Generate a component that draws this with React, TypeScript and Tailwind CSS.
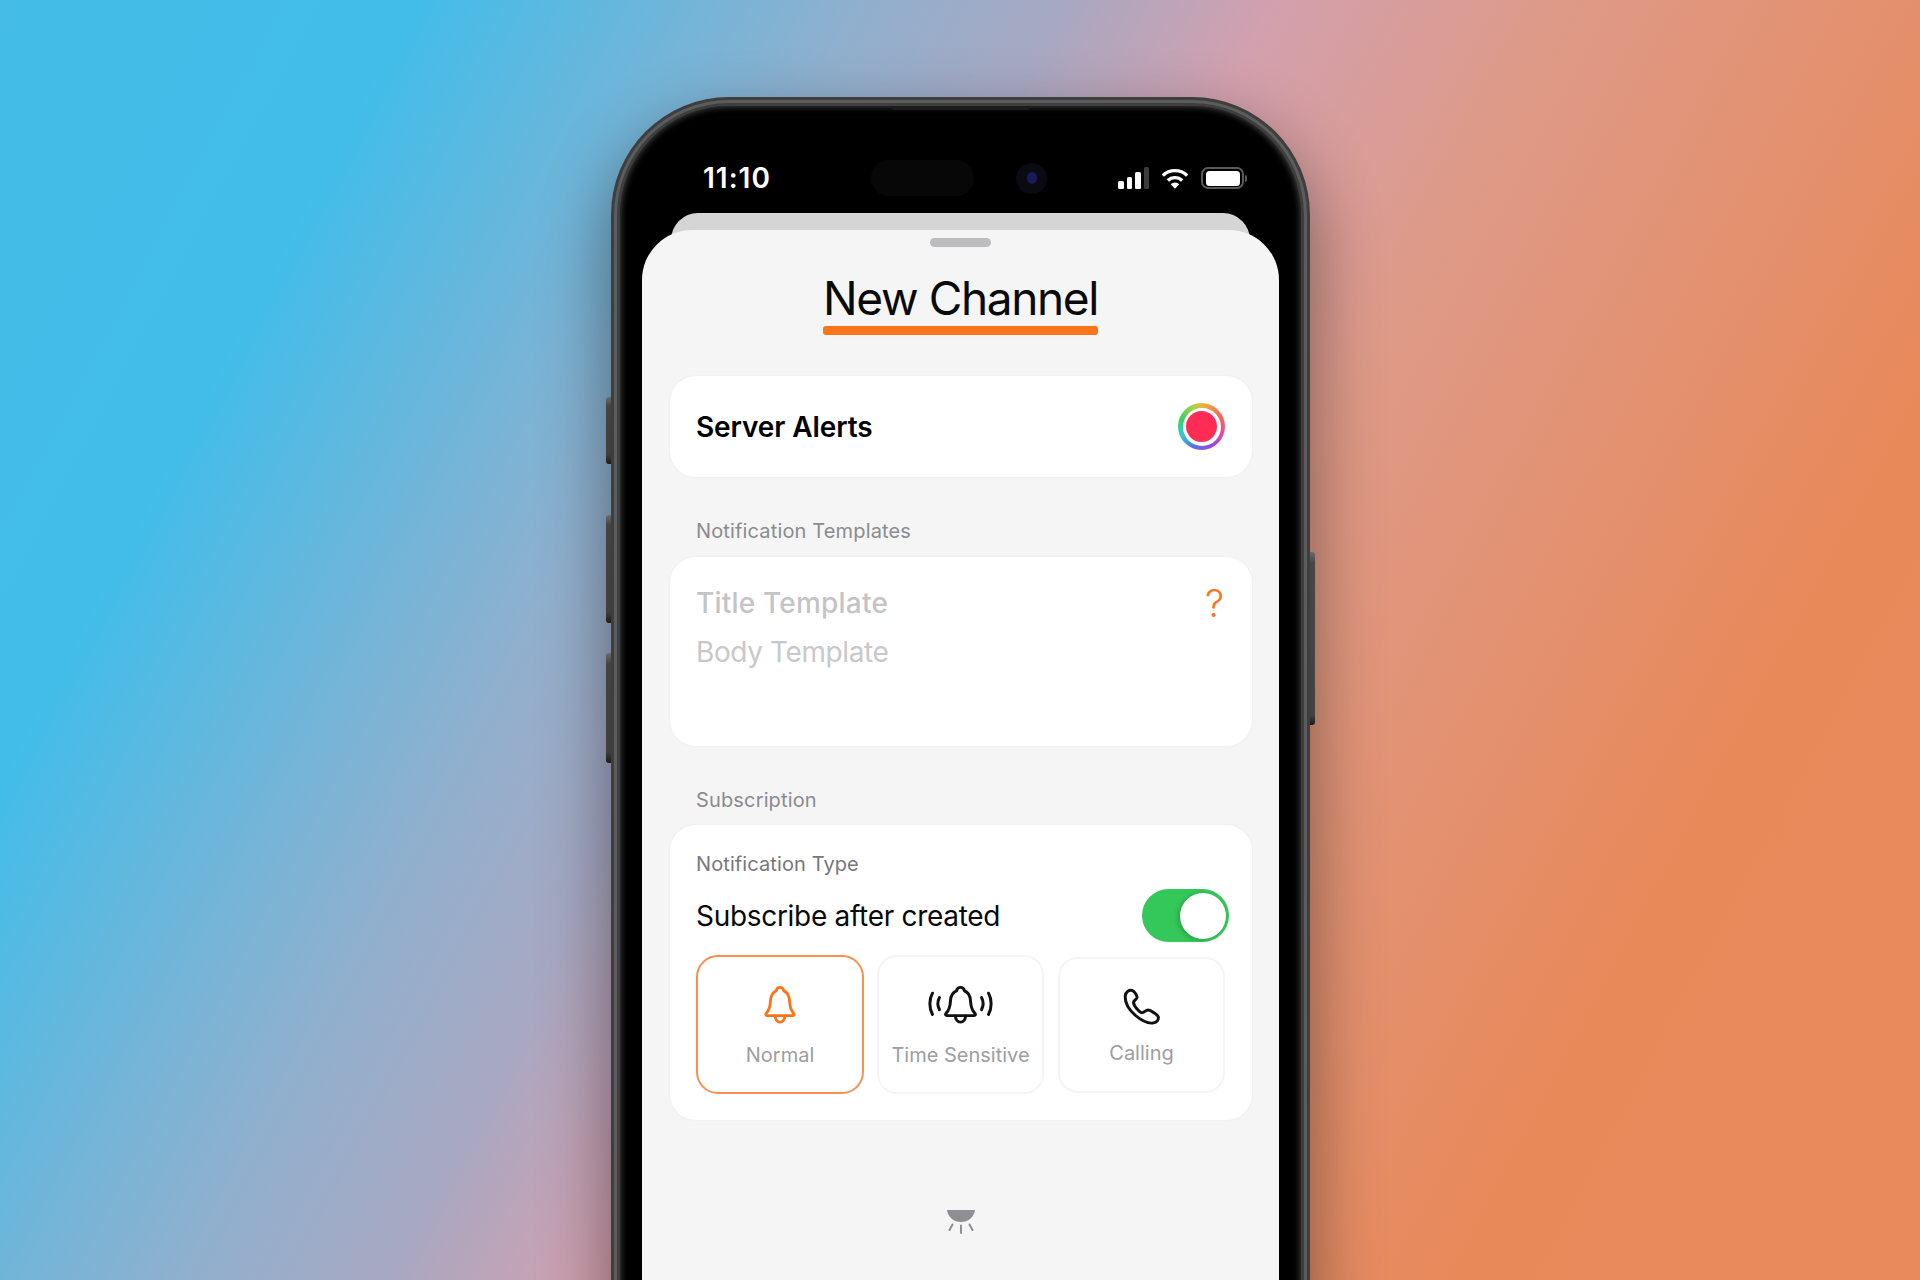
const font = "font-['Inter','Noto_Sans',sans-serif]";

function Bell({ className }: { className: string }) {
  return (
    <svg viewBox="0 0 34 40" className={className} fill="none" stroke="currentColor" strokeWidth="3" strokeLinecap="round" strokeLinejoin="round">
      <path d="M17 1.500c-2.300 0-3.600 1.700-3.900 3.600C9 6.600 7.300 10.600 7 15.500c-.3 5.600-1.200 9.800-4.400 13.200-1 1.100-.6 2.500.9 2.500h27c1.500 0 1.900-1.400.9-2.500-3.200-3.400-4.100-7.600-4.400-13.200-.3-4.900-2-8.900-6.100-10.400-.3-1.900-1.600-3.600-3.900-3.600Z" />
      <path d="M11.800 31.500c.3 3.600 2.400 6.500 5.200 6.500s4.900-2.900 5.200-6.500" />
    </svg>
  );
}

function RingBell() {
  return (
    <svg viewBox="0 0 67 40" className="h-[38px] w-[67px] text-[#111]" preserveAspectRatio="none" fill="none" stroke="currentColor" strokeWidth="3" strokeLinecap="round" strokeLinejoin="round">
      <g transform="translate(16.500 0)">
        <path d="M17 1.500c-2.300 0-3.600 1.700-3.900 3.600C9 6.600 7.300 10.600 7 15.500c-.3 5.600-1.200 9.800-4.400 13.200-1 1.100-.6 2.500.9 2.500h27c1.500 0 1.900-1.400.9-2.500-3.200-3.400-4.100-7.600-4.400-13.200-.3-4.900-2-8.900-6.100-10.400-.3-1.900-1.600-3.600-3.900-3.600Z" />
        <path d="M11.800 31.500c.3 3.600 2.400 6.500 5.200 6.500s4.900-2.900 5.200-6.500" />
      </g>
      <path d="M5.500 7.500C2 14 2 23 5.500 30" />
      <path d="M12.500 12c-2 4-2 9 0 13" />
      <path d="M61.500 7.500c3.500 6.500 3.500 15.500 0 22.500" />
      <path d="M54.500 12c2 4 2 9 0 13" />
    </svg>
  );
}

function PhoneGlyph() {
  return (
    <svg viewBox="0 0 37 39" className="h-[37px] w-[37px] text-[#111]" preserveAspectRatio="none" fill="none" stroke="currentColor" strokeWidth="3" strokeLinecap="round" strokeLinejoin="round">
      <path d="M9 2.500C6 1.700 2.800 4 2.300 8 1.700 14.500 5.800 22.500 12 28.500c6 5.500 13 9.300 18.500 8.300 3.200-.6 5.300-3.300 4.800-6.300-.4-2-7.800-7.300-10.300-7.300-2.200 0-4 3-6 3-3-.6-8.300-7.500-8.500-11 0-2.200 3-3 3.500-5.200C14.300 8 11.300 3.300 9 2.500Z" />
    </svg>
  );
}

function Tile({ label, icon, active, className, labelClass }: { label: string; icon: React.ReactNode; active?: boolean; className: string; labelClass: string }) {
  return (
    <div className={`flex flex-col items-center bg-white ${active ? "rounded-[22px] border-2 border-[#fb8f4e]" : "rounded-[20px] border-2 border-[#f5f5f6]"} ${className}`}>
      <div className="flex h-[38px] items-center justify-center">{icon}</div>
      <div className={`text-[20px] leading-[24px] text-[#9d9da2] ${labelClass}`}>{label}</div>
    </div>
  );
}

function SectionLabel({ children, className = "" }: { children: React.ReactNode; className?: string }) {
  return <div className={`pl-[26px] text-[20px] leading-[24px] tracking-[0.15px] text-[#8b8b90] ${className}`}>{children}</div>;
}

export default function App() {
  return (
    <div className={`${font} relative flex h-[1280px] w-[1920px] justify-center overflow-hidden bg-[linear-gradient(118deg,#45bce8_0%,#42bde9_16%,#8fb0ce_33%,#a8a8c2_41%,#d2a0ae_49%,#de9a88_60%,#e8895a_82%,#e88a5c_100%)] pt-[97px] pl-[1px]`}>
      <div className="relative h-[1320px] w-[699px] shrink-0">
        {/* side buttons */}
        <div className="absolute top-[300px] -left-[5px] h-[67px] w-[7px] rounded-l-[3px] bg-[linear-gradient(180deg,#888_0%,#565656_14%,#505050_86%,#222_100%)]" />
        <div className="absolute top-[418px] -left-[5px] h-[108px] w-[7px] rounded-l-[3px] bg-[linear-gradient(180deg,#888_0%,#565656_10%,#505050_90%,#222_100%)]" />
        <div className="absolute top-[556px] -left-[5px] h-[110px] w-[7px] rounded-l-[3px] bg-[linear-gradient(180deg,#888_0%,#565656_10%,#505050_90%,#222_100%)]" />
        <div className="absolute top-[455px] -right-[5px] h-[173px] w-[7px] rounded-r-[3px] bg-[linear-gradient(180deg,#888_0%,#5a5a5a_6%,#555_94%,#222_100%)]" />

        {/* body */}
        <div className="relative h-full rounded-t-[118px] bg-[#3e3e3e] p-[3px] pb-0 shadow-[0_30px_70px_rgba(0,0,0,0.45)]">
          <div className="h-full rounded-t-[115px] bg-[#5c5c5c] p-[3px] pb-0">
            <div className="h-full rounded-t-[112px] bg-[#3e3e3e] p-[3px] pb-0">
              <div className="relative h-full rounded-t-[109px] bg-black px-[22px] pt-[28px] shadow-[inset_0_0_7px_rgba(90,90,90,0.9)]">
                <div className="absolute top-0 left-[271px] h-[4px] w-[139px] rounded-b-[3px] bg-[#1c1c1c]" />
                {/* status bar */}
                <div className="flex h-[79px] items-center px-[4px] pt-[23px] pb-[14px]">
                  <div className="ml-[57px] w-[168px] text-[28px] leading-[34px] font-semibold tracking-[1px] text-white">11:10</div>
                  <div className="h-[36px] w-[103px] rounded-full bg-[#070707]" />
                  <div className="ml-[42px] flex h-[31px] w-[31px] items-center justify-center rounded-full bg-[#0a0a12]">
                    <div className="h-[12px] w-[10px] rounded-full bg-[#1a1a5a]" />
                  </div>
                  <div className="ml-[71px] flex h-[22px] items-end gap-[3px]">
                    <div className="h-[8px] w-[5.500px] rounded-[1.500px] bg-white" />
                    <div className="h-[12px] w-[5.500px] rounded-[1.500px] bg-white" />
                    <div className="h-[17px] w-[5.500px] rounded-[1.500px] bg-white" />
                    <div className="h-[22px] w-[5.500px] rounded-[1.500px] bg-[#3c3c3c]" />
                  </div>
                  <svg viewBox="0 0 28 21" className="ml-[12px] h-[21px] w-[28px]" fill="none" stroke="white" strokeWidth="3.400">
                    <path d="M1.800 7.600A17.500 17.500 0 0 1 26.200 7.600" />
                    <path d="M6.800 12.500A10.400 10.400 0 0 1 21.200 12.500" />
                    <path d="M14 20.800 9.700 16.300A6 6 0 0 1 18.300 16.300Z" fill="white" stroke="none" />
                  </svg>
                  <div className="ml-[12px] flex items-center">
                    <div className="flex h-[22px] w-[43px] items-center justify-center rounded-[7px] border-2 border-[#5a5a5a]">
                      <div className="h-[15px] w-[34px] rounded-[3.500px] bg-white" />
                    </div>
                    <div className="ml-[1px] h-[7px] w-[2px] rounded-r-full bg-[#5a5a5a]" />
                  </div>
                </div>

                {/* back sheet */}
                <div className="mx-[29px] h-[40px] rounded-t-[27px] bg-[#d5d5d5]" />

                {/* sheet */}
                <div className="relative -mt-[23px] flex h-[1100px] flex-col rounded-t-[50px] bg-[#f5f5f5] pt-[8px] pr-[27px] pl-[27px] text-[#0a0a0a]">
                  <div className="mx-auto h-[9px] w-[61px] rounded-full bg-[#bdbdbf]" />
                  <div className="mx-auto mt-[23px] flex flex-col items-center">
                    <div className="text-[46px] leading-[56px] font-normal tracking-[-1.4px] text-[#0a0a0a]">New Channel</div>
                    <div className="h-[9px] w-[275px] rounded-[3px] bg-[#fb7419]" />
                  </div>

                  <div className="mt-[41px] ml-[1px] flex h-[101px] items-center justify-between rounded-[26px] bg-white pr-[27px] pl-[26px] shadow-[0_0_3px_rgba(0,0,0,0.05)]">
                    <div className="mt-[1px] text-[28px] leading-[34px] font-semibold tracking-[-0.1px] text-black">Server Alerts</div>
                    <div className="flex h-[47px] w-[47px] items-center justify-center rounded-full bg-[conic-gradient(#e8b93c_0deg,#f26a5a_60deg,#ee4f8c_100deg,#a53fe2_150deg,#5a6fe8_200deg,#2fc9d0_245deg,#3dd064_290deg,#a8d04a_335deg,#e8b93c_360deg)]">
                      <div className="flex h-[38px] w-[38px] items-center justify-center rounded-full bg-white">
                        <div className="h-[31px] w-[31px] rounded-full bg-[#ff2d55]" />
                      </div>
                    </div>
                  </div>

                  <div className="ml-[1px]">
                    <SectionLabel className="mt-[42px]">Notification Templates</SectionLabel>
                    <div className="mt-[14px] flex h-[189px] items-start justify-between rounded-[26px] bg-white pt-[29px] pr-[28px] pl-[26px] shadow-[0_0_3px_rgba(0,0,0,0.05)]">
                      <div>
                        <div className="text-[28px] leading-[34px] font-medium tracking-[0.2px] text-[#c4c4c6]">Title Template</div>
                        <div className="mt-[15px] text-[28px] leading-[34px] tracking-[-0.4px] text-[#c8c8ca]">Body Template</div>
                      </div>
                      <div className="text-[38px] leading-[34px] font-light text-[#fb7419]">?</div>
                    </div>

                    <SectionLabel className="mt-[42px]">Subscription</SectionLabel>
                    <div className="mt-[13px] h-[295px] rounded-[26px] bg-white pt-[27px] pr-[25px] pl-[26px] shadow-[0_0_3px_rgba(0,0,0,0.05)]">
                      <div className="text-[20px] leading-[24px] tracking-[0.1px] text-[#77777c]">Notification Type</div>
                      <div className="mt-[13px] -mr-[2px] flex h-[53px] items-center justify-between">
                        <div className="text-[28px] leading-[36px] tracking-[-0.3px] text-[#0a0a0a]">Subscribe after created</div>
                        <div className="flex h-[53px] w-[87px] items-center justify-end rounded-full bg-[#34c759] pr-[3px]">
                          <div className="h-[46px] w-[46px] rounded-full bg-white shadow-[-2px_1px_5px_rgba(0,0,0,0.2)]" />
                        </div>
                      </div>
                      <div className="mt-[13px] flex items-start">
                        <Tile active label="Normal" className="h-[139px] w-[168px] pt-[29px]" labelClass="mt-[19px]" icon={<Bell className="h-[38px] w-[34px] text-[#fb7419]" />} />
                        <Tile label="Time Sensitive" className="ml-[13px] h-[139px] w-[167px] pt-[29px]" labelClass="mt-[19px]" icon={<RingBell />} />
                        <div className="mt-[2px] ml-[14px]">
                          <Tile label="Calling" className="h-[136px] w-[167px] pt-[28px]" labelClass="mt-[16px]" icon={<PhoneGlyph />} />
                        </div>
                      </div>
                    </div>
                  </div>

                  <div className="mt-[90px] flex justify-center">
                    <svg viewBox="0 0 28 24" className="h-[24px] w-[28px]" fill="none">
                      <path d="M0 0H28C27 7.500 21 12 14 12S1 7.500 0 0Z" fill="#8e8e93" />
                      <path d="M14 15.500V23M5.500 14.500 2.500 20M22.500 14.500 25.500 20" stroke="#8e8e93" strokeWidth="2" strokeLinecap="round" />
                    </svg>
                  </div>
                </div>
              </div>
            </div>
          </div>
        </div>
      </div>
    </div>
  );
}
